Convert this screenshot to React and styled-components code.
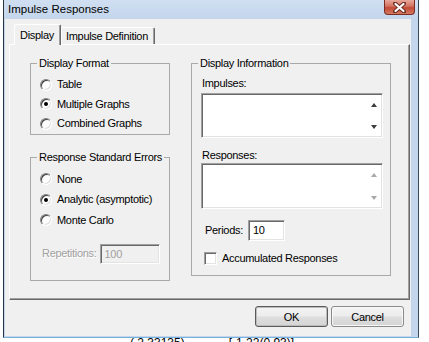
import styled, { createGlobalStyle } from "styled-components";

const GlobalStyle = createGlobalStyle`
  html, body {
    margin: 0;
    padding: 0;
    background: #fff;
  }
  body {
    font-family: "Liberation Sans", Arial, sans-serif;
  }
  * {
    box-sizing: border-box;
  }
`;

const Screen = styled.div`
  position: relative;
  width: 429px;
  height: 342px;
  overflow: hidden;
  background: #fff;
`;

const BackdropText = styled.div`
  position: absolute;
  left: 130px;
  top: 336px;
  display: flex;
  gap: 44px;
  font-size: 12px;
  line-height: 14px;
  color: #000;
  white-space: pre;
`;

const Window = styled.div`
  position: absolute;
  left: 3px;
  top: 0;
  width: 416px;
  height: 338px;
  display: flex;
  flex-direction: column;
  background: #c4d6ec;
  border-left: 1px solid #2a3440;
  border-right: 1px solid #34495c;
  border-bottom: 1px solid #78b0dc;
`;

const TitleBar = styled.div`
  height: 19px;
  flex-shrink: 0;
  display: flex;
  align-items: flex-start;
  justify-content: space-between;
  padding-left: 4px;
  background: linear-gradient(#d0dff1, #c4d6ec);
`;

const Title = styled.span`
  font-size: 11.5px;
  line-height: 18px;
  color: #000;
`;

const CloseButton = styled.div`
  width: 31px;
  height: 15px;
  margin-right: 3px;
  display: flex;
  align-items: center;
  justify-content: center;
  border: 1px solid #7c2c22;
  border-top: none;
  border-radius: 0 0 4px 4px;
  background: linear-gradient(#e8a99c, #d2715f 45%, #c24a36 55%, #d47a62);
`;

const Client = styled.div`
  flex: 1;
  margin: 0 7px 1px 1px;
  padding: 5px 1px 0 4px;
  display: flex;
  flex-direction: column;
  background: #f0f0f0;
  font-size: 11px;
  letter-spacing: -0.3px;
  color: #000;
`;

const TabStrip = styled.div`
  position: relative;
  z-index: 1;
  height: 21px;
  margin-bottom: -1px;
  padding-left: 5px;
  display: flex;
  align-items: flex-end;
`;

const Tab = styled.div`
  height: ${(p) => (p.$active ? "21px" : "17px")};
  margin-bottom: ${(p) => (p.$active ? "0" : "1px")};
  padding: ${(p) => (p.$active ? "4px 6px 0 5px" : "2px 6px 0 4px")};
  background: #f0f0f0;
  border-top: 1px solid #fff;
  border-left: 1px solid #fff;
  border-right: 1px solid #696969;
  border-radius: 2px 2px 0 0;
  box-shadow: inset -1px 0 #a0a0a0;
  line-height: 13px;
  white-space: nowrap;
`;

const Panel = styled.div`
  width: 401px;
  height: 256px;
  padding: 12px 0 0 20px;
  display: grid;
  grid-template-columns: 140px 200px;
  column-gap: 21px;
  align-items: start;
  border: 1px solid;
  border-color: #fff #696969 #696969 #fff;
  box-shadow: inset -1px -1px #a0a0a0;
`;

const Column = styled.div`
  display: flex;
  flex-direction: column;
  gap: 16px;
`;

const GroupBox = styled.fieldset`
  margin: 0;
  min-width: 0;
  height: ${(p) => p.$height}px;
  padding: ${(p) => p.$top}px 6px 0 6px;
  border: 1px solid #a9a9a9;
  display: flex;
  flex-direction: column;
  align-items: flex-start;
`;

const Legend = styled.legend`
  padding: 0 2px;
  margin: 0;
  line-height: 12px;
  white-space: nowrap;
`;

const RadioList = styled.div`
  display: grid;
  grid-auto-rows: ${(p) => p.$row}px;
  margin-left: 3px;
`;

const OptionRow = styled.label`
  display: flex;
  align-items: center;
  gap: 5px;
  line-height: 13px;
  white-space: nowrap;
`;

const RadioDot = styled.span`
  position: relative;
  width: 12px;
  height: 12px;
  flex-shrink: 0;
  border-radius: 50%;
  background: #fff;
  border: 1px solid;
  border-color: #808080 #fff #fff #808080;
  box-shadow: inset 1px 1px #404040, inset -1px -1px #dcdcdc;
  &::after {
    content: "";
    display: ${(p) => (p.$checked ? "block" : "none")};
    position: absolute;
    left: 3px;
    top: 3px;
    width: 4px;
    height: 4px;
    border-radius: 50%;
    background: #000;
  }
`;

const Sunken = styled.div`
  border: 1px solid;
  border-color: #a0a0a0 #fff #fff #a0a0a0;
  box-shadow: inset 1px 1px #696969, inset -1px -1px #e3e3e3;
  background: ${(p) => (p.$disabled ? "#f0f0f0" : "#fff")};
`;

const InlineField = styled.div`
  display: flex;
  align-items: center;
  gap: ${(p) => p.$gap}px;
  margin: ${(p) => p.$top}px 0 0 ${(p) => p.$left}px;
  line-height: 13px;
  white-space: nowrap;
  color: ${(p) => (p.$disabled ? "#a0a0a0" : "#000")};
  text-shadow: ${(p) => (p.$disabled ? "1px 1px #fff" : "none")};
`;

const TextBox = styled(Sunken)`
  width: ${(p) => p.$width}px;
  height: ${(p) => p.$height}px;
  padding: 3px 0 0 4px;
  line-height: 13px;
  font-size: 11px;
  color: ${(p) => (p.$disabled ? "#a0a0a0" : "#000")};
  text-shadow: none;
`;

const Caption = styled.div`
  margin: ${(p) => p.$top}px 0 0 4px;
  line-height: 13px;
`;

const ListBox = styled(Sunken)`
  width: 182px;
  height: ${(p) => p.$height}px;
  margin: ${(p) => p.$top}px 0 0 3px;
  display: flex;
  justify-content: flex-end;
`;

const ScrollColumn = styled.div`
  width: 16px;
  padding: 9px 0 8px;
  display: flex;
  flex-direction: column;
  align-items: center;
  justify-content: space-between;
`;

const CheckBox = styled(Sunken)`
  width: 13px;
  height: 13px;
`;

const ButtonRow = styled.div`
  margin: 6px 6px 0 0;
  display: flex;
  justify-content: flex-end;
  gap: 3px;
`;

const Button = styled.button`
  width: 73px;
  height: 21px;
  padding: 0;
  font-family: "Liberation Sans", Arial, sans-serif;
  font-size: 11px;
  letter-spacing: -0.3px;
  color: #000;
  border: 1px solid ${(p) => (p.$default ? "#5a5a5a" : "#8a8a8a")};
  border-radius: 3px;
  background: linear-gradient(#f4f4f4, #ececec 48%, #dedede 52%, #d4d4d4);
  box-shadow: ${(p) =>
    p.$default ? "inset 0 0 0 1px #bcbcbc" : "inset 0 0 0 1px #f8f8f8"};
`;

function Arrow({ up, color }) {
  return (
    <svg width="6" height="4" viewBox="0 0 6 4">
      <path d={up ? "M0 4 L3 0 L6 4 Z" : "M0 0 L6 0 L3 4 Z"} fill={color} />
    </svg>
  );
}

function List({ top, height, arrowColor }) {
  return (
    <ListBox $top={top} $height={height}>
      <ScrollColumn>
        <Arrow up color={arrowColor} />
        <Arrow color={arrowColor} />
      </ScrollColumn>
    </ListBox>
  );
}

function Radio({ label, checked }) {
  return (
    <OptionRow>
      <RadioDot $checked={checked} />
      {label}
    </OptionRow>
  );
}

export default function App() {
  return (
    <>
      <GlobalStyle />
      <Screen>
        <BackdropText>
          <span>( 2.33135)</span>
          <span>[-1.22(0.93)]</span>
        </BackdropText>
        <Window>
          <TitleBar>
            <Title>Impulse Responses</Title>
            <CloseButton>
              <svg width="13" height="11" viewBox="0 0 13 11">
                <path
                  d="M2 1.5 L11 9.5 M11 1.5 L2 9.5"
                  stroke="#6b2a22"
                  strokeWidth="4"
                  strokeLinecap="round"
                />
                <path
                  d="M2.5 2 L10.5 9 M10.5 2 L2.5 9"
                  stroke="#fff"
                  strokeWidth="2.2"
                  strokeLinecap="round"
                />
              </svg>
            </CloseButton>
          </TitleBar>
          <Client>
            <TabStrip>
              <Tab $active>Display</Tab>
              <Tab>Impulse Definition</Tab>
            </TabStrip>
            <Panel>
              <Column>
                <GroupBox $height={78} $top={6}>
                  <Legend>Display Format</Legend>
                  <RadioList $row={19.5}>
                    <Radio label="Table" />
                    <Radio label="Multiple Graphs" checked />
                    <Radio label="Combined Graphs" />
                  </RadioList>
                </GroupBox>
                <GroupBox $height={130} $top={6}>
                  <Legend>Response Standard Errors</Legend>
                  <RadioList $row={20.5}>
                    <Radio label="None" />
                    <Radio label="Analytic (asymptotic)" checked />
                    <Radio label="Monte Carlo" />
                  </RadioList>
                  <InlineField $top={13} $left={5} $gap={3} $disabled>
                    Repetitions:
                    <TextBox $width={60} $height={20} $disabled>
                      100
                    </TextBox>
                  </InlineField>
                </GroupBox>
              </Column>
              <GroupBox $height={219} $top={8}>
                <Legend>Display Information</Legend>
                <Caption $top={0}>Impulses:</Caption>
                <List top={3} height={45} arrowColor="#3c3c3c" />
                <Caption $top={11}>Responses:</Caption>
                <List top={1} height={46} arrowColor="#a8a8a8" />
                <InlineField $top={11} $left={7} $gap={5}>
                  Periods:
                  <TextBox $width={37} $height={21}>
                    10
                  </TextBox>
                </InlineField>
                <InlineField $top={11} $left={6} $gap={5}>
                  <CheckBox />
                  Accumulated Responses
                </InlineField>
              </GroupBox>
            </Panel>
            <ButtonRow>
              <Button $default>OK</Button>
              <Button>Cancel</Button>
            </ButtonRow>
          </Client>
        </Window>
      </Screen>
    </>
  );
}
